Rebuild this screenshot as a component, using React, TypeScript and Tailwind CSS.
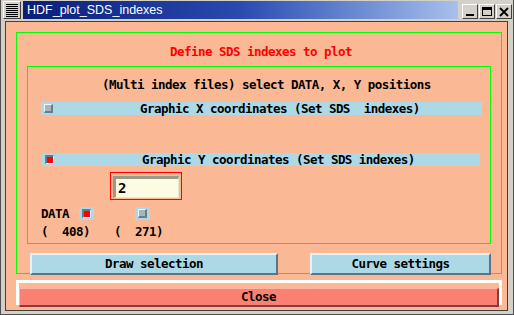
import { useState } from 'react';

const mono = "font-['DejaVu_Sans_Mono',monospace] font-bold text-[12.5px] tracking-[-0.53px] leading-[13px] whitespace-pre";

function Check({ on }: { on?: boolean }) {
  if (on) {
    return (
      <span className="block w-[9px] h-[9px] border-t-2 border-l-2 border-b border-r border-t-[#6a7c88] border-l-[#6a7c88] border-b-[#eef8fc] border-r-[#eef8fc] bg-[#ff0000]" />
    );
  }
  return (
    <span className="block w-[9px] h-[9px] border-t border-l border-b-2 border-r-2 border-t-[#eef8fc] border-l-[#eef8fc] border-b-[#6a7c88] border-r-[#6a7c88] bg-[#a4b4c0]" />
  );
}

function WinButton({ children }: { children: React.ReactNode }) {
  return (
    <div className="w-[16px] h-[15px] bg-[#d4d0c8] border border-t-white border-l-white border-b-[#404040] border-r-[#404040] flex items-center justify-center">
      {children}
    </div>
  );
}

const blueButton =
  'w-full h-[22px] bg-[#add8e6] text-black border-2 border-t-[#e4f2f8] border-l-[#e4f2f8] border-b-[#5e7386] border-r-[#5e7386]';

export default function App() {
  const [value, setValue] = useState('2');

  return (
    <div className="w-[514px] h-[315px] bg-[#d4d0c8] border-l border-r border-b border-[#505050] flex flex-col overflow-hidden">
      {/* Title bar */}
      <div className="h-[21px] shrink-0 flex items-start pt-[1px]">
        <div className="ml-[2px] w-[18px] h-[18px] bg-[#d4d0c8] border border-t-white border-l-white border-b-[#404040] border-r-[#404040] flex flex-col justify-center gap-[1px] px-[2px]">
          {[0, 1, 2, 3, 4, 5, 6].map((i) => (
            <span key={i} className="block h-px bg-black" />
          ))}
        </div>
        <div className="ml-[2px] w-[435px] h-[18px] bg-gradient-to-r from-[#0a1e78] via-[#2a4ab0] to-[#a8c0ec] flex items-center pl-[4px]">
          <span className="text-white text-[12.5px] font-['Liberation_Sans',sans-serif] leading-none">HDF_plot_SDS_indexes</span>
        </div>
        <div className="ml-[4px] mt-[3px] flex gap-[1px]">
          <WinButton>
            <span className="block w-[8px] h-[2px] bg-black mt-[6px]" />
          </WinButton>
          <WinButton>
            <span className="block w-[10px] h-[9px] border border-black border-t-[3px]" />
          </WinButton>
          <WinButton>
            <svg width="10" height="10" viewBox="0 0 10 10">
              <path d="M1 1 L9 9 M9 1 L1 9" stroke="black" strokeWidth="1.8" />
            </svg>
          </WinButton>
        </div>
      </div>

      {/* Window body */}
      <div className="ml-[4px] mr-[5px] h-[290px] shrink-0 border border-[#404040] bg-[#fbb895] flex flex-col">
        {/* Outer green box */}
        <div className="ml-[10px] mr-[5px] mt-[10px] h-[242px] shrink-0 border border-[#00ff00] flex flex-col">
          <div className={`${mono} text-[#ff0000] text-center mt-[12px] pl-[4px]`}>Define SDS indexes to plot</div>

          {/* Inner green box */}
          <div className="ml-[10px] mr-[10px] mt-[8px] h-[178px] shrink-0 border border-[#00ff00] flex flex-col">
            <div className={`${mono} text-black mt-[11px] ml-[74px]`}>(Multi index files) select DATA, X, Y positions</div>

            <div className="mt-[11px] ml-[13px] w-[441px] h-[13px] bg-[#add8e6] flex items-center">
              <span className="ml-[3px]"><Check /></span>
              <span className="ml-[3px] w-[82px] border-b border-dotted border-[#c4d4dc]" />
              <span className={`${mono} text-black ml-[2px]`}>Graphic X coordinates (Set SDS  indexes)</span>
              <span className="ml-[3px] mr-[4px] flex-1 border-b border-dotted border-[#c4d4dc]" />
            </div>

            <div className="mt-[38px] ml-[14px] w-[438px] h-[13px] bg-[#add8e6] flex items-center">
              <span className="ml-[3px]"><Check on /></span>
              <span className={`${mono} text-black ml-[88px]`}>Graphic Y coordinates (Set SDS indexes)</span>
            </div>

            <div className="mt-[6px] ml-[82px] w-[72px] h-[28px] border border-[#ff0000] p-[2px]">
              <input
                value={value}
                onChange={(e) => setValue(e.target.value)}
                className="w-[66px] h-[22px] bg-[#fcfce2] text-black pl-[2px] outline-none font-['DejaVu_Sans_Mono',monospace] font-bold text-[14px] border-t-[3px] border-l-[3px] border-b border-r border-t-[#9a9a88] border-l-[#9a9a88] border-b-[#e8e8d0] border-r-[#e8e8d0]"
              />
            </div>

            <div className="mt-[7px] ml-[13px] flex items-center h-[13px]">
              <span className={`${mono} text-black w-[38px]`}>DATA</span>
              <span className="w-[15px] h-[13px] bg-[#add8e6] flex items-center justify-center"><Check on /></span>
              <span className="ml-[41px] w-[15px] h-[13px] bg-[#add8e6] flex items-center justify-center"><Check /></span>
            </div>

            <div className="mt-[5px] ml-[13px] flex">
              <span className={`${mono} text-black w-[73px]`}>(  408)</span>
              <span className={`${mono} text-black`}>(  271)</span>
            </div>
          </div>

          {/* Action buttons */}
          <div className="mt-[6px] flex">
            <div className="ml-[13px] w-[248px]">
              <button className={`${mono} ${blueButton}`}>Draw selection</button>
            </div>
            <div className="ml-[32px] w-[181px]">
              <button className={`${mono} ${blueButton}`}>Curve settings</button>
            </div>
          </div>
        </div>

        {/* Close */}
        <div className="ml-[10px] mr-[5px] mt-[6px] h-[25px] shrink-0 border-[3px] border-white">
          <button className={`${mono} w-full h-[19px] bg-[#fa8072] text-black border-t border-l border-b-2 border-r-2 border-t-[#ffb4a4] border-l-[#ffb4a4] border-b-[#8a3a3a] border-r-[#8a3a3a]`}>
            Close
          </button>
        </div>
      </div>
    </div>
  );
}
